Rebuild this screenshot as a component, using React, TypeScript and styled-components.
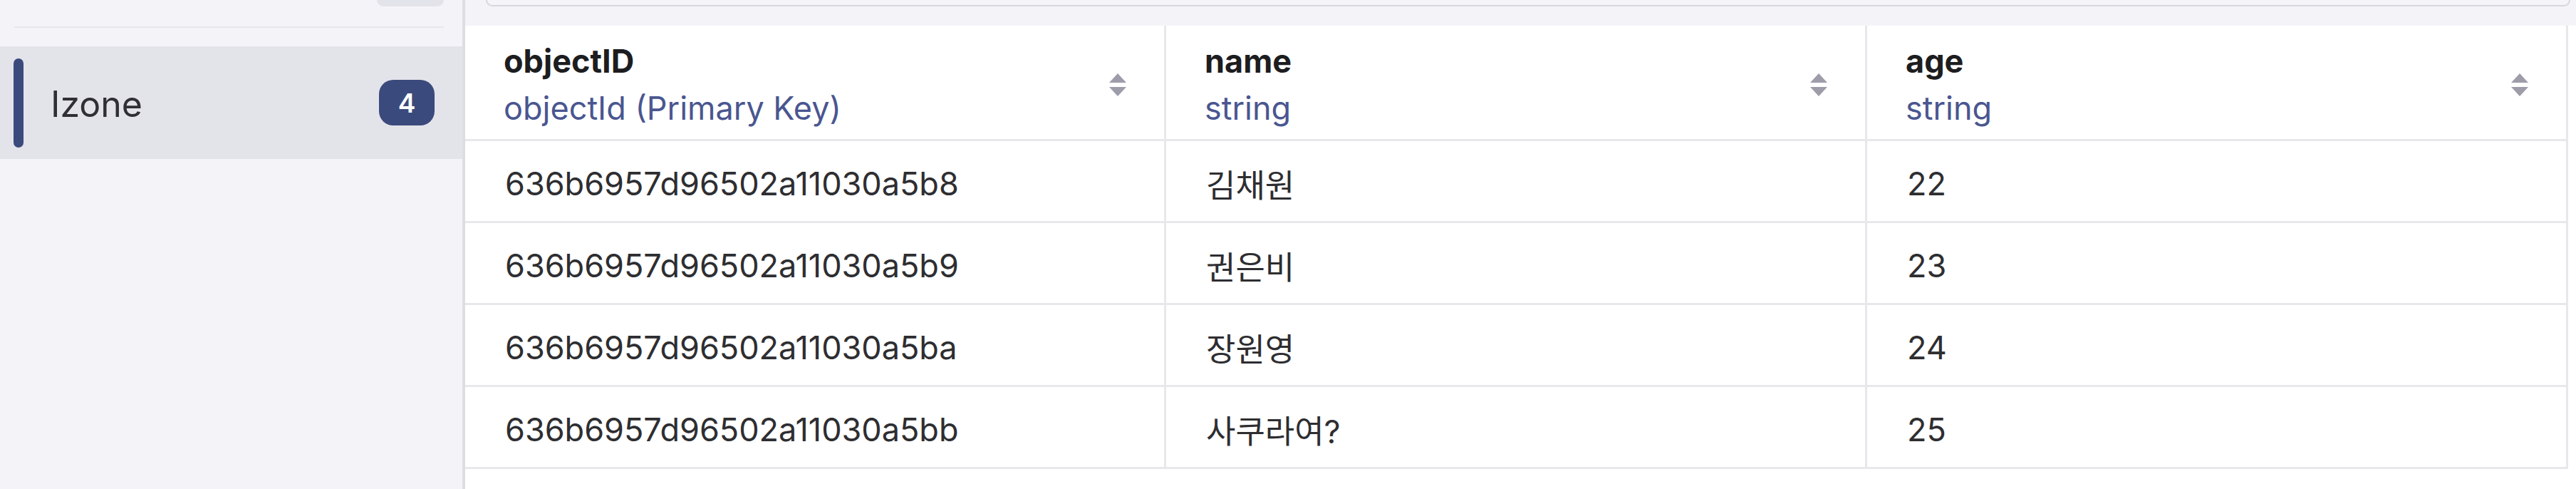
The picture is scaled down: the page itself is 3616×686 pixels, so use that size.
import React from 'react'
import styled, { createGlobalStyle } from 'styled-components'

const GlobalStyle = createGlobalStyle`
  html, body {
    margin: 0;
    padding: 0;
    background: #ffffff;
  }
  body {
    font-family: Inter, "Noto Sans CJK KR", sans-serif;
    -webkit-font-smoothing: antialiased;
  }
  * {
    box-sizing: border-box;
  }
`

const Page = styled.div`
  display: flex;
  width: 3616px;
  height: 686px;
  overflow: hidden;
  background: #ffffff;
`

const Sidebar = styled.aside`
  width: 653px;
  flex: none;
  display: flex;
  flex-direction: column;
  background: #f4f4f8;
  border-right: 4px solid #dddde4;
`

const PrevItem = styled.div`
  height: 37px;
  display: flex;
  justify-content: flex-end;
  padding-right: 26px;
`

const PrevBadge = styled.div`
  width: 94px;
  height: 9px;
  background: #e3e3ea;
  border-radius: 0 0 14px 14px;
`

const Separator = styled.div`
  height: 2px;
  margin: 0 26px 26px 20px;
  background: #e6e6ec;
`

const ClassItem = styled.div<{ active?: boolean }>`
  height: 158px;
  display: flex;
  align-items: center;
  padding: 0 39px 0 19px;
  background: ${({ active }) => (active ? '#e3e3ea' : 'transparent')};
`

const Accent = styled.div`
  width: 14px;
  height: 125px;
  border-radius: 7px;
  background: #3b4a7c;
`

const ClassName = styled.div`
  flex: 1;
  margin-left: 38px;
  padding-top: 4px;
  font-size: 50px;
  color: #303033;
`

const CountBadge = styled.div`
  min-width: 78px;
  height: 64px;
  padding: 0 22px;
  border-radius: 20px;
  display: flex;
  align-items: center;
  justify-content: center;
  background: #3b4a7c;
  color: #ffffff;
  font-size: 37px;
  font-weight: 600;
`

const Main = styled.main`
  flex: 1;
  display: flex;
  flex-direction: column;
  min-width: 0;
`

const TopStrip = styled.div`
  height: 36px;
  flex: none;
  background: #f4f4f8;
  padding: 0 8px 0 29px;
`

const ToolbarCard = styled.div`
  height: 9px;
  border: 2px solid #d6d6de;
  border-top: none;
  border-radius: 0 0 22px 22px;
  background: #f5f5f9;
`

const Grid = styled.div`
  display: grid;
  grid-template-columns: repeat(3, 984px);
`

const HeadCell = styled.div`
  height: 162px;
  display: flex;
  align-items: center;
  justify-content: space-between;
  padding: 6px 53px 0 54px;
  border-right: 3px solid #e8e8ec;
  border-bottom: 3px solid #e8e8ec;
`

const HeadText = styled.div`
  display: flex;
  flex-direction: column;
  line-height: 66px;
`

const FieldName = styled.div`
  font-size: 45px;
  font-weight: 700;
  color: #1d1d20;
`

const FieldType = styled.div`
  font-size: 45px;
  color: #4a5690;
`

const Cell = styled.div`
  height: 115px;
  display: flex;
  align-items: center;
  padding: 6px 0 0 56px;
  border-right: 3px solid #e8e8ec;
  border-bottom: 3px solid #e8e8ec;
  font-size: 45px;
  color: #2e2e31;
  white-space: nowrap;
`

const SortIcon = () => (
  <svg width="24" height="32" viewBox="0 0 24 32" fill="#9d9daa">
    <path d="M12 0 L24 13 L0 13 Z" />
    <path d="M0 19 L24 19 L12 32 Z" />
  </svg>
)

const columns = [
  { name: 'objectID', type: 'objectId (Primary Key)' },
  { name: 'name', type: 'string' },
  { name: 'age', type: 'string' },
]

const rows = [
  ['636b6957d96502a11030a5b8', '김채원', '22'],
  ['636b6957d96502a11030a5b9', '권은비', '23'],
  ['636b6957d96502a11030a5ba', '장원영', '24'],
  ['636b6957d96502a11030a5bb', '사쿠라여?', '25'],
]

export default function App() {
  return (
    <>
      <GlobalStyle />
      <Page>
        <Sidebar>
          <PrevItem>
            <PrevBadge />
          </PrevItem>
          <Separator />
          <ClassItem active>
            <Accent />
            <ClassName>Izone</ClassName>
            <CountBadge>{rows.length}</CountBadge>
          </ClassItem>
        </Sidebar>
        <Main>
          <TopStrip>
            <ToolbarCard />
          </TopStrip>
          <Grid>
            {columns.map((col) => (
              <HeadCell key={col.name}>
                <HeadText>
                  <FieldName>{col.name}</FieldName>
                  <FieldType>{col.type}</FieldType>
                </HeadText>
                <SortIcon />
              </HeadCell>
            ))}
            {rows.map((row) =>
              row.map((value, i) => <Cell key={row[0] + i}>{value}</Cell>)
            )}
          </Grid>
        </Main>
      </Page>
    </>
  )
}
